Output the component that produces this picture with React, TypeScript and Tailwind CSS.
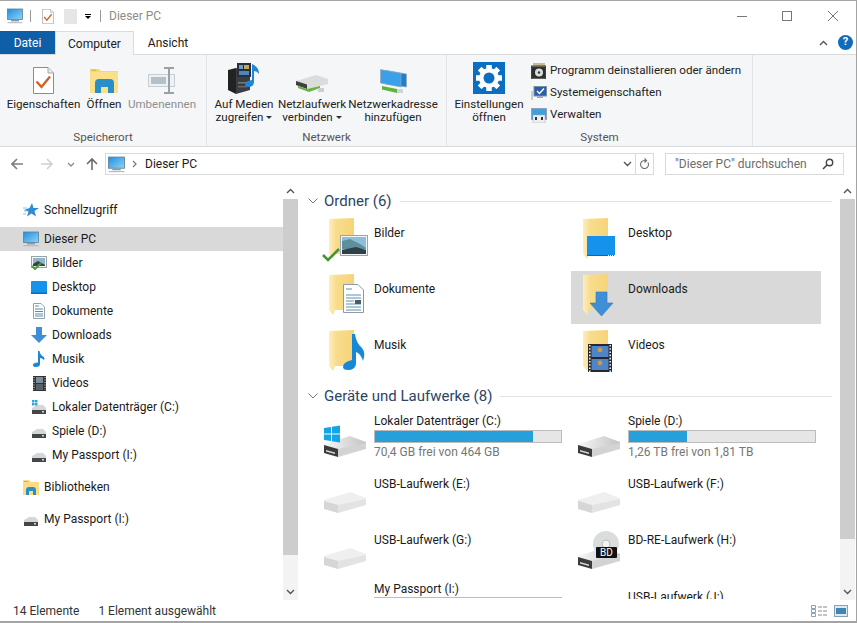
import type { ReactNode } from "react";

type Kid = { label: string; icon: ReactNode; parent?: boolean; selected?: boolean; gap?: boolean };

function Monitor({ size = 16 }: { size?: number }) {
  return (
    <svg width={size} height={size} viewBox="0 0 16 16" className="shrink-0">
      <defs>
        <linearGradient id="mon" x1="0" y1="0" x2="1" y2="1">
          <stop offset="0" stopColor="#1f8fe0" />
          <stop offset="1" stopColor="#8fd4f5" />
        </linearGradient>
      </defs>
      <rect x="0.5" y="1" width="15" height="10.5" fill="url(#mon)" stroke="#5b7f99" strokeWidth="0.8" />
      <rect x="4" y="12" width="8" height="1.4" fill="#8a9aa5" />
      <rect x="0.5" y="14.2" width="15" height="1" fill="#a9b6c0" />
    </svg>
  );
}

function PropsDoc({ w, h }: { w: number; h: number }) {
  return (
    <svg width={w} height={h} viewBox="0 0 21 27">
      <path d="M0.5 0.5H15L20.5 6V26.5H0.5Z" fill="#fff" stroke="#8c8c8c" />
      <path d="M15 0.5V6H20.5" fill="#e8e8e8" stroke="#a8a8a8" />
      <path d="M3.5 14.5L8.5 20L17 9.5" fill="none" stroke="#d2622c" strokeWidth="2.4" />
    </svg>
  );
}

function OpenFolder() {
  return (
    <svg width="29" height="26" viewBox="0 0 29 26">
      <path d="M0 1H9L11 3H28V25H0Z" fill="#f9d774" />
      <path d="M0 4H28V25H0Z" fill="#fbe08c" />
      <rect x="1.5" y="1.5" width="5" height="1.5" fill="#e6b93f" />
      <path d="M5 25V15Q5 11 9 11H20Q24 11 24 15V25H18V19H11V25Z" fill="#2a8fc9" />
    </svg>
  );
}

function RenameIcon() {
  return (
    <svg width="28" height="27" viewBox="0 0 28 27">
      <rect x="0.5" y="7.5" width="26" height="12" fill="#eef1f3" stroke="#c6ced3" />
      <rect x="3" y="10" width="15" height="7" fill="#b4c1c9" />
      <path d="M16 1H26M21 1V26M16 26H26" stroke="#9aa1a6" strokeWidth="2" fill="none" />
    </svg>
  );
}

function MediaIcon() {
  return (
    <svg width="32" height="31" viewBox="0 0 32 31">
      <path d="M0 7L8 5V31L0 27Z" fill="#222" />
      <path d="M8 5L22 9V27L8 31Z" fill="#3a3d42" />
      <rect x="9" y="0" width="14" height="14" fill="#27303a" />
      <rect x="11" y="2" width="4" height="4" fill="#6aa0d0" />
      <rect x="16" y="2" width="5" height="4" fill="#c9a65a" />
      <rect x="11" y="8" width="10" height="4" fill="#4d86bd" />
      <rect x="10" y="19" width="9" height="1.5" fill="#777" />
      <rect x="10" y="23" width="9" height="1.5" fill="#666" />
      <path d="M24 1L26 2Q31 5 31 11Q29 8 26 8V19Q26 24 20 24Q17 24 17 21Q17 18 24 17Z" fill="#1f86d6" />
    </svg>
  );
}

function NetDrive() {
  return (
    <svg width="32" height="19" viewBox="0 0 32 19">
      <path d="M0 6L20 0L32 4V9L11 14L0 10Z" fill="#dcdcdc" />
      <path d="M0 6L11 9.5V14L0 10Z" fill="#3f3f3f" />
      <path d="M2 11L11 14L24 11V13L13 17L2 13Z" fill="#63b53f" />
      <rect x="22" y="13" width="6" height="4" fill="#cfcfcf" />
    </svg>
  );
}

function NetAddress() {
  return (
    <svg width="27" height="25" viewBox="0 0 27 25">
      <path d="M6 1.5L26.5 5V18L6 15Z" fill="#1f7fc9" stroke="#8fa8b8" strokeWidth="0.7" />
      <path d="M0.5 0.5L21 4.5V18L0.5 14Z" fill="#3aa0ea" stroke="#8fa8b8" strokeWidth="0.7" />
      <path d="M2 17L17 20V24L2 20.5Z" fill="#5cb53b" />
      <rect x="17" y="20" width="6" height="4" fill="#cdd5d8" />
    </svg>
  );
}

function SettingsIcon() {
  const teeth = [0, 45, 90, 135, 180, 225, 270, 315];
  return (
    <svg width="32" height="32" viewBox="0 0 32 32">
      <rect width="32" height="32" fill="#0a6fc2" />
      {teeth.map((a) => (
        <rect key={a} x="13.5" y="3" width="5" height="26" fill="#fff" transform={`rotate(${a} 16 16)`} />
      ))}
      <circle cx="16" cy="16" r="10" fill="#fff" />
      <circle cx="16" cy="16" r="5.5" fill="#0a6fc2" />
    </svg>
  );
}

function UninstallIcon() {
  return (
    <svg width="16" height="16" viewBox="0 0 16 16">
      <path d="M2 0H14V3H2Z" fill="#c8bd8a" />
      <rect x="0.5" y="3" width="14" height="13" fill="#e9e9e9" stroke="#444" />
      <rect x="1" y="3.5" width="13" height="12" fill="#2f2f2f" />
      <circle cx="8" cy="9.5" r="4" fill="#ddd" />
      <circle cx="8" cy="9.5" r="1.2" fill="#333" />
    </svg>
  );
}

function SysPropsIcon() {
  return (
    <svg width="16" height="14" viewBox="0 0 16 14">
      <rect x="3" y="0.5" width="12.5" height="9.5" fill="#2c5ea8" stroke="#7a8fa5" />
      <path d="M6 5L8.5 7.5L13 2.5" fill="none" stroke="#fff" strokeWidth="1.4" />
      <rect x="0" y="5" width="2" height="9" fill="#c7ccd0" />
      <rect x="6" y="10.5" width="6" height="1.5" fill="#9aa4ac" />
    </svg>
  );
}

function ManageIcon() {
  return (
    <svg width="16" height="15" viewBox="0 0 16 15">
      <rect x="0.5" y="0.5" width="15" height="11" fill="#3f9fe0" stroke="#8aa6b8" />
      <rect x="2" y="7" width="12" height="8" fill="#eee" stroke="#aaa" strokeWidth="0.5" />
      <rect x="4" y="9" width="2" height="3" fill="#333" />
      <rect x="10" y="9" width="2" height="3" fill="#333" />
    </svg>
  );
}

function Star() {
  return (
    <svg width="16" height="14" viewBox="0 0 16 14">
      <path d="M9 0L10.5 5H16L11.5 8L13 13.5L8.5 10.5L4 13.5L5.5 8.5L1 7L6.5 5Z" fill="#2f8bd4" />
      <path d="M0 5H4M1 8H4M0 11H3" stroke="#8cc2e8" strokeWidth="1" />
    </svg>
  );
}

function SmallPictures() {
  return (
    <svg width="16" height="14" viewBox="0 0 16 14">
      <rect x="0.5" y="0.5" width="15" height="11" fill="#f4f6f7" stroke="#9aa3a9" />
      <rect x="2" y="2" width="12" height="8" fill="#8fb6cc" />
      <path d="M2 8L7 5L14 9V10H2Z" fill="#37424a" />
      <path d="M1 10L4 13L10 7" fill="none" stroke="#4d9a38" strokeWidth="2" />
    </svg>
  );
}

function SmallDesktop() {
  return (
    <svg width="16" height="13" viewBox="0 0 16 13">
      <rect width="16" height="13" rx="1" fill="#1592ec" />
      <rect x="0" y="11.5" width="16" height="1.5" fill="#0e6db3" />
    </svg>
  );
}

function SmallDoc() {
  return (
    <svg width="12" height="16" viewBox="0 0 12 16">
      <path d="M0.5 0.5H8L11.5 4V15.5H0.5Z" fill="#fff" stroke="#93a3ad" />
      <path d="M2 3H6M2 6H10M2 8.5H10M2 11H10M2 13H10" stroke="#5b8db0" strokeWidth="1" />
    </svg>
  );
}

function SmallDown() {
  return (
    <svg width="16" height="16" viewBox="0 0 16 16">
      <path d="M5 0H11V8H16L8 16L0 8H5Z" fill="#3f8fd6" />
    </svg>
  );
}

function SmallNote() {
  return (
    <svg width="12" height="16" viewBox="0 0 12 16">
      <path d="M5 0H6.5Q7 4 11 6Q12 8 11 9Q9 7 7 7V13Q7 16 3 16Q0 16 0 14Q0 11.5 5 11.5Z" fill="#1f86d6" />
    </svg>
  );
}

function SmallFilm() {
  return (
    <svg width="13" height="15" viewBox="0 0 13 15">
      <rect width="13" height="15" fill="#333" />
      <rect x="3" y="1" width="7" height="6" fill="#7c8d9d" />
      <rect x="3" y="8" width="7" height="6" fill="#57616c" />
      <path d="M1 1V14M12 1V14" stroke="#ddd" strokeWidth="1" strokeDasharray="1 1.5" />
    </svg>
  );
}

function SmallDrive({ win }: { win?: boolean }) {
  return (
    <svg width="14" height="14" viewBox="0 0 14 14">
      <path d="M0 8L5 5H11L14 8V10H0Z" fill="#d4d6d8" />
      <rect x="0" y="10" width="14" height="4" fill="#44474a" />
      <rect x="10" y="11" width="2" height="1.5" fill="#ddd" />
      {win && (
        <g fill="#25a9e0">
          <rect x="0" y="0" width="2.5" height="2.5" />
          <rect x="3" y="0" width="2.5" height="2.5" />
          <rect x="0" y="3" width="2.5" height="2.5" />
          <rect x="3" y="3" width="2.5" height="2.5" />
        </g>
      )}
    </svg>
  );
}

function SmallLibrary() {
  return (
    <svg width="16" height="15" viewBox="0 0 16 15">
      <path d="M0 0H6L8 2H16V15H0Z" fill="#fbdc86" />
      <rect x="1" y="1" width="4" height="1" fill="#d8a93c" />
      <path d="M3 15V10Q3 7 6 7H10Q13 7 13 10V15H10V11H6V15Z" fill="#2a8fc9" />
    </svg>
  );
}

// big folder with an overlay drawn in the same 48x48 box
function FolderIcon({ children }: { children: ReactNode }) {
  return (
    <svg width="48" height="48" viewBox="0 0 48 48" className="shrink-0">
      <defs>
        <linearGradient id="fld" x1="0" y1="0" x2="1" y2="0">
          <stop offset="0" stopColor="#fdeebc" />
          <stop offset="0.3" stopColor="#f8dc8c" />
          <stop offset="1" stopColor="#f6d478" />
        </linearGradient>
      </defs>
      <path d="M7 4L32 3V39H13L11 44L7 39Z" fill="url(#fld)" />
      {children}
    </svg>
  );
}

const folderOverlays: Record<string, ReactNode> = {
  Bilder: (
    <g>
      <rect x="18.5" y="20.5" width="27" height="20" fill="#f2f4f5" stroke="#9ba3a8" />
      <rect x="20" y="22" width="24" height="17" fill="#8cc0da" />
      <path d="M20 26L28 24L38 29L44 33V34H20Z" fill="#5f8e9c" />
      <path d="M20 35L34 32L44 35V39H20Z" fill="#2f4049" />
      <path d="M1 40L6 45L17 34" fill="none" stroke="#4a9137" strokeWidth="2.6" />
    </g>
  ),
  Dokumente: (
    <g>
      <path d="M21.5 13.5H36L41.5 19V41.5H21.5Z" fill="#fff" stroke="#8d9ba4" />
      <path d="M24 18H30M24 24H39M24 27H39M24 30H32M24 33H39M24 36H39M24 39H39" stroke="#5f8eae" strokeWidth="1" />
      <rect x="33" y="29" width="6" height="4" fill="#4a5a66" />
    </g>
  ),
  Musik: (
    <path d="M30 7H33Q34 16 40 21Q44 26 41 34Q39 27 34 25V37Q33 43 26 43Q21 43 21 40Q21 35 30 33Z" fill="#1787d8" />
  ),
  Desktop: (
    <g>
      <rect x="11" y="21" width="28" height="20" fill="#1592ec" />
      <rect x="11" y="40" width="28" height="1" fill="#0d67ad" />
      <path d="M32 40.5H39" stroke="#fff" strokeWidth="1" strokeDasharray="1 1" />
    </g>
  ),
  Downloads: <path d="M20 21H31V32H37L25.5 45L14 32H20Z" fill="#3f8fd6" stroke="#2f78bd" strokeWidth="0.6" />,
  Videos: (
    <g>
      <rect x="12" y="17" width="24" height="28" fill="#27292e" />
      <rect x="15.5" y="19" width="17" height="11" fill="#4f85c6" />
      <rect x="15.5" y="32" width="17" height="11" fill="#4f85c6" />
      <circle cx="24" cy="23" r="2.4" fill="#c69a4c" />
      <circle cx="24" cy="36" r="2.4" fill="#c69a4c" />
      <path d="M13.8 18V45M34.2 18V45" stroke="#e8e8e8" strokeWidth="1.6" strokeDasharray="1.6 1.6" />
    </g>
  ),
};

function DriveIcon({ kind }: { kind: "hdd" | "win" | "usb" | "bd" }) {
  const pale = kind === "usb";
  return (
    <svg width="48" height="48" viewBox="0 0 48 48" className="shrink-0">
      <defs>
        <linearGradient id="hddtop" x1="0" y1="0" x2="1" y2="0">
          <stop offset="0" stopColor="#f7f7f7" />
          <stop offset="1" stopColor="#c4c4c4" />
        </linearGradient>
      </defs>
      {kind === "bd" && (
        <g>
          <circle cx="30" cy="15" r="13" fill="#dadcdd" />
          <circle cx="30" cy="15" r="4" fill="#f2f2f2" stroke="#bbb" />
        </g>
      )}
      <path d="M2 27L28 19L44 25V31L16 38L2 34Z" fill={pale ? "#efefef" : "url(#hddtop)"} />
      <path d="M2 28L16 32V40L2 36Z" fill={pale ? "#d6d6d6" : "#3b3b3b"} />
      <path d="M16 32L44 26V32L16 40Z" fill={pale ? "#e3e3e3" : "#d3d3d3"} />
      {!pale && <path d="M4 33L13 35.5V37L4 34.5Z" fill="#ddd" />}
      {kind === "win" && (
        <g fill="#15a4e6">
          <path d="M2 11L9 10V16.5H2Z" />
          <path d="M10 9.8L18 8.5V16.5H10Z" />
          <path d="M2 17.5H9V24L2 23Z" />
          <path d="M10 17.5H18V25.5L10 24.2Z" />
        </g>
      )}
      {kind === "bd" && (
        <g>
          <rect x="20" y="18" width="21" height="11" rx="1" fill="#111" />
          <text x="30.5" y="27" fontSize="10" fill="#fff" textAnchor="middle" fontFamily="Roboto, sans-serif">
            BD
          </text>
        </g>
      )}
    </svg>
  );
}

function Chevron({ up, className = "" }: { up?: boolean; className?: string }) {
  return (
    <svg width="9" height="6" viewBox="0 0 9 6" className={className}>
      <path d={up ? "M1 5L4.5 1.5L8 5" : "M1 1L4.5 4.5L8 1"} fill="none" stroke="#555" strokeWidth="1.4" />
    </svg>
  );
}

function BigButton({ icon, lines, width, drop, dim }: { icon: ReactNode; lines: string[]; width: string; drop?: boolean; dim?: boolean }) {
  return (
    <div className={`flex flex-col items-center ${width}`}>
      <div className="h-[39px] flex items-end justify-center">{icon}</div>
      <div className={`mt-[4px] text-center leading-[13px] whitespace-nowrap ${dim ? "text-[#8f8f8f]" : "text-[#222]"}`}>
        {lines.map((l, i) => (
          <div key={l}>
            {l}
            {drop && i === lines.length - 1 && <span className="inline-block ml-[3px] mb-[2px] border-x-[3px] border-t-[3px] border-x-transparent border-t-[#333]" />}
          </div>
        ))}
      </div>
    </div>
  );
}

function NavRow({ kid }: { kid: Kid }) {
  return (
    <div
      className={`h-6 flex items-center ${kid.parent ? "pl-[23px] gap-[5px]" : "pl-[31px] gap-[5px]"} ${kid.selected ? "bg-[#d9d9d9]" : ""} ${kid.gap ? "mt-2" : ""}`}
    >
      <span className="w-4 h-4 flex items-center justify-center shrink-0">{kid.icon}</span>
      <span>{kid.label}</span>
    </div>
  );
}

function SectionHead({ title, lineClass }: { title: string; lineClass?: string }) {
  return (
    <div className={`h-5 flex items-center pl-[10px] ${lineClass ?? ""}`}>
      <svg width="10" height="6" viewBox="0 0 10 6" className="mr-[6px]">
        <path d="M0.5 0.5L5 5L9.5 0.5" fill="none" stroke="#6d7a8a" strokeWidth="1" />
      </svg>
      <span className="text-[15px] text-[#2a4565] whitespace-nowrap">{title}</span>
      <div className="flex-1 h-px bg-[#e2e2e2] ml-2" />
    </div>
  );
}

function ScrollBar({ thumb, className = "" }: { thumb: string; className?: string }) {
  return (
    <div className={`w-[15px] shrink-0 bg-[#f3f3f3] flex flex-col items-center ${className}`}>
      <div className="h-4 flex items-center justify-center bg-white w-full">
        <Chevron up />
      </div>
      <div className={`w-full bg-[#cdcdcd] ${thumb}`} />
      <div className="flex-1" />
      <div className="h-4 flex items-center justify-center">
        <Chevron />
      </div>
    </div>
  );
}

function Meter({ pct }: { pct: number }) {
  return (
    <div className="h-[13px] w-[188px] mt-[1px] bg-[#e6e6e6] border border-[#bcbcbc]">
      <div className="h-full bg-[#26a0da]" style={{ width: `${pct}%` }} />
    </div>
  );
}

const navItems: Kid[] = [
  { label: "Bilder", icon: <SmallPictures /> },
  { label: "Desktop", icon: <SmallDesktop /> },
  { label: "Dokumente", icon: <SmallDoc /> },
  { label: "Downloads", icon: <SmallDown /> },
  { label: "Musik", icon: <SmallNote /> },
  { label: "Videos", icon: <SmallFilm /> },
  { label: "Lokaler Datenträger (C:)", icon: <SmallDrive win /> },
  { label: "Spiele (D:)", icon: <SmallDrive /> },
  { label: "My Passport (I:)", icon: <SmallDrive /> },
];

const folders = ["Bilder", "Desktop", "Dokumente", "Downloads", "Musik", "Videos"];

const drives: { name: string; kind: "hdd" | "win" | "usb" | "bd"; pct?: number; free?: string }[] = [
  { name: "Lokaler Datenträger (C:)", kind: "win", pct: 85, free: "70,4 GB frei von 464 GB" },
  { name: "Spiele (D:)", kind: "hdd", pct: 31, free: "1,26 TB frei von 1,81 TB" },
  { name: "USB-Laufwerk (E:)", kind: "usb" },
  { name: "USB-Laufwerk (F:)", kind: "usb" },
  { name: "USB-Laufwerk (G:)", kind: "usb" },
  { name: "BD-RE-Laufwerk (H:)", kind: "bd" },
];

export default function App() {
  return (
    <div
      className="w-[857px] h-[623px] flex flex-col overflow-hidden bg-white border-t border-r border-b-2 border-[#a3a3a3] text-[12px] text-[#1a1a1a]"
      style={{ fontFamily: "Roboto, 'Noto Sans', sans-serif" }}
    >
      {/* title bar */}
      <div className="h-[30px] flex items-center pl-[7px] shrink-0">
        <Monitor />
        <div className="w-px h-3 bg-[#9a9a9a] ml-[7px]" />
        <div className="ml-[11px]">
          <PropsDoc w={12} h={15} />
        </div>
        <div className="ml-[10px] w-[13px] h-[15px] bg-[#e4e6e8]" />
        <div className="ml-[8px] flex flex-col items-center gap-[1px]">
          <div className="w-[6px] h-px bg-black" />
          <div className="border-x-[3px] border-t-[3px] border-x-transparent border-t-black" />
        </div>
        <div className="w-px h-3 bg-[#9a9a9a] ml-[9px]" />
        <span className="ml-2 text-[#8c8c8c]">Dieser PC</span>
        <div className="ml-auto flex items-center">
          <div className="w-[10px] h-px bg-[#777] mr-[35px]" />
          <div className="w-[10px] h-[10px] border border-[#777] mr-[36px]" />
          <svg width="10" height="10" viewBox="0 0 10 10" className="mr-[18px]">
            <path d="M0 0L10 10M10 0L0 10" stroke="#777" strokeWidth="1" />
          </svg>
        </div>
      </div>

      {/* tabs */}
      <div className="h-[24px] flex items-stretch shrink-0 border-b border-[#dadbdc]">
        <div className="w-[55px] bg-[#0f5fa8] text-white flex items-center justify-center">Datei</div>
        <div className="w-[79px] h-[24px] bg-[#f5f6f7] border-x border-t border-[#dadbdc] flex items-center justify-center">Computer</div>
        <div className="w-[68px] flex items-center justify-center">Ansicht</div>
        <div className="ml-auto flex items-center pr-[3px] gap-[10px]">
          <Chevron up />
          <div className="w-[15px] h-[15px] rounded-full bg-[#0f6cbd] text-white font-bold text-[11px] flex items-center justify-center">?</div>
        </div>
      </div>

      {/* ribbon */}
      <div className="h-[92px] flex shrink-0 bg-[#f5f6f7] border-b border-[#dadbdc] text-[11.6px]">
        <div className="w-[207px] flex flex-col border-r border-[#e2e3e4]">
          <div className="flex-1 min-h-0 flex pl-[3px]">
            <BigButton width="w-[81px]" lines={["Eigenschaften"]} icon={<PropsDoc w={21} h={27} />} />
            <BigButton width="w-[40px]" lines={["Öffnen"]} icon={<OpenFolder />} />
            <BigButton width="w-[76px]" lines={["Umbenennen"]} dim icon={<RenameIcon />} />
          </div>
          <div className="h-4 mb-[1px] text-center text-[#555]">Speicherort</div>
        </div>
        <div className="w-[240px] flex flex-col border-r border-[#e2e3e4]">
          <div className="flex-1 min-h-0 flex pl-[4px]">
            <BigButton width="w-[66px]" lines={["Auf Medien", "zugreifen"]} drop icon={<MediaIcon />} />
            <BigButton width="w-[70px]" lines={["Netzlaufwerk", "verbinden"]} drop icon={<NetDrive />} />
            <BigButton width="w-[92px]" lines={["Netzwerkadresse", "hinzufügen"]} icon={<NetAddress />} />
          </div>
          <div className="h-4 mb-[1px] text-center text-[#555]">Netzwerk</div>
        </div>
        <div className="w-[306px] flex flex-col border-r border-[#e2e3e4]">
          <div className="flex-1 min-h-0 flex pl-[5px]">
            <BigButton width="w-[74px]" lines={["Einstellungen", "öffnen"]} icon={<SettingsIcon />} />
            <div className="pt-[5px] pl-[5px] flex flex-col">
              {[
                { label: "Programm deinstallieren oder ändern", icon: <UninstallIcon /> },
                { label: "Systemeigenschaften", icon: <SysPropsIcon /> },
                { label: "Verwalten", icon: <ManageIcon /> },
              ].map((r) => (
                <div key={r.label} className="h-[22px] flex items-center gap-[3px] whitespace-nowrap text-[#222]">
                  <span className="w-4 flex justify-center">{r.icon}</span>
                  {r.label}
                </div>
              ))}
            </div>
          </div>
          <div className="h-4 mb-[1px] text-center text-[#555]">System</div>
        </div>
      </div>

      {/* address bar */}
      <div className="h-[36px] flex items-center shrink-0 pl-[11px] pb-[2px]">
        <svg width="100" height="14" viewBox="0 0 100 14" className="shrink-0">
          <path d="M1 7H12M6 2L1 7L6 12" fill="none" stroke="#7d7d7d" strokeWidth="1.6" />
          <path d="M30 7H41M36 2L41 7L36 12" fill="none" stroke="#cfcfcf" strokeWidth="1.6" />
          <path d="M57 6L60 9L63 6" fill="none" stroke="#8a8a8a" strokeWidth="1.3" />
          <path d="M81 13V2M76 7L81 2L86 7" fill="none" stroke="#6a6a6a" strokeWidth="1.6" />
        </svg>
        <div className="ml-[-6px] w-[549px] h-[22px] border border-[#d9d9d9] flex items-center pl-[2px]">
          <Monitor size={17} />
          <svg width="6" height="8" viewBox="0 0 6 8" className="ml-[7px]">
            <path d="M1 1L4 4L1 7" fill="none" stroke="#777" strokeWidth="1.2" />
          </svg>
          <span className="ml-[7px]">Dieser PC</span>
          <div className="ml-auto flex items-center h-full">
            <Chevron className="mr-[3px]" />
            <div className="w-[18px] h-full border-l border-[#d9d9d9] flex items-center justify-center">
              <svg width="11" height="12" viewBox="0 0 11 12">
                <path d="M9 4.5A4 4 0 1 1 5.5 2.5H7M5.5 0.5L7.5 2.5L5.5 4.5" fill="none" stroke="#6f6f6f" strokeWidth="1.1" />
              </svg>
            </div>
          </div>
        </div>
        <div className="ml-[11px] w-[179px] h-[22px] border border-[#d9d9d9] flex items-center pl-[9px] text-[#6d6d6d]">
          "Dieser PC" durchsuchen
          <svg width="12" height="12" viewBox="0 0 12 12" className="ml-auto mr-[9px]">
            <circle cx="7.5" cy="4.5" r="3.2" fill="none" stroke="#444" strokeWidth="1.4" />
            <path d="M5 7L1 11" stroke="#444" strokeWidth="1.6" />
          </svg>
        </div>
      </div>

      {/* main */}
      <div className="flex-1 min-h-0 flex">
        <div className="w-[283px] shrink-0 pt-[15px]">
          <NavRow kid={{ label: "Schnellzugriff", icon: <Star />, parent: true }} />
          <div className="h-[5px]" />
          <NavRow kid={{ label: "Dieser PC", icon: <Monitor />, parent: true, selected: true }} />
          {navItems.map((k) => (
            <NavRow key={k.label} kid={k} />
          ))}
          <NavRow kid={{ label: "Bibliotheken", icon: <SmallLibrary />, parent: true, gap: true }} />
          <NavRow kid={{ label: "My Passport (I:)", icon: <SmallDrive />, parent: true, gap: true }} />
        </div>
        <ScrollBar thumb="h-[356px]" />

        <div className="flex-1 min-w-0 overflow-hidden mb-[1px] pt-[8px] pl-[19px]">
          <SectionHead title="Ordner (6)" lineClass="-ml-[19px] pl-[10px] mr-2" />
          <div className="grid grid-cols-[254px_254px] auto-rows-[56px] mt-[4px]">
            {folders.map((f) => (
              <div key={f} className={`w-[250px] h-[53px] flex items-start pl-[5px] gap-1 ${f === "Downloads" ? "bg-[#d9d9d9]" : ""}`}>
                <FolderIcon>{folderOverlays[f]}</FolderIcon>
                <span className="mt-[9px]">{f}</span>
              </div>
            ))}
          </div>
          <SectionHead title="Geräte und Laufwerke (8)" lineClass="-ml-[19px] pl-[10px] mr-2 mt-[3px]" />
          <div className="grid grid-cols-[254px_254px] auto-rows-[56px] mt-[7px]">
            {drives.map((d) => (
              <div key={d.name} className="flex items-start pl-[5px] gap-1">
                <div className="pt-1">
                  <DriveIcon kind={d.kind} />
                </div>
                <div className={d.pct ? "pt-0" : "pt-[7px]"}>
                  <div className="leading-[16px] whitespace-nowrap">{d.name}</div>
                  {d.pct && <Meter pct={d.pct} />}
                  {d.free && <div className="text-[#767676] leading-[16px] mt-[1px] whitespace-nowrap">{d.free}</div>}
                </div>
              </div>
            ))}
            <div className="flex items-start pl-[5px] gap-1">
              <div className="w-12 shrink-0" />
              <div className="leading-[16px] w-[188px] border-b border-[#bcbcbc] whitespace-nowrap">My Passport (I:)</div>
            </div>
            <div className="flex items-start pl-[5px] gap-1">
              <div className="w-12 shrink-0" />
              <div className="pt-[7px] whitespace-nowrap">USB-Laufwerk (J:)</div>
            </div>
          </div>
        </div>
        <ScrollBar thumb="h-[340px]" className="mr-px" />
      </div>

      {/* status bar */}
      <div className="h-[21px] flex items-center shrink-0 pl-[13px] text-[#333] bg-white relative">
        <span>14 Elemente</span>
        <span className="ml-[19px]">1 Element ausgewählt</span>
        <div className="ml-auto flex items-center gap-[7px] pr-2">
          <svg width="16" height="12" viewBox="0 0 16 12">
            <path d="M0.5 0.5H4.5V3.5H0.5ZM0.5 4.5H4.5V7.5H0.5ZM0.5 8.5H4.5V11.5H0.5Z" fill="none" stroke="#8aa0b3" />
            <path d="M7 2H16M7 6H16M7 10H16" stroke="#8a8a8a" strokeDasharray="4 1" />
          </svg>
          <svg width="14" height="12" viewBox="0 0 14 12">
            <rect x="0.5" y="0.5" width="13" height="11" fill="#dfe9ef" stroke="#8aa0b3" />
            <rect x="2" y="3" width="10" height="6" fill="#3f86b5" />
          </svg>
        </div>
      </div>
    </div>
  );
}
